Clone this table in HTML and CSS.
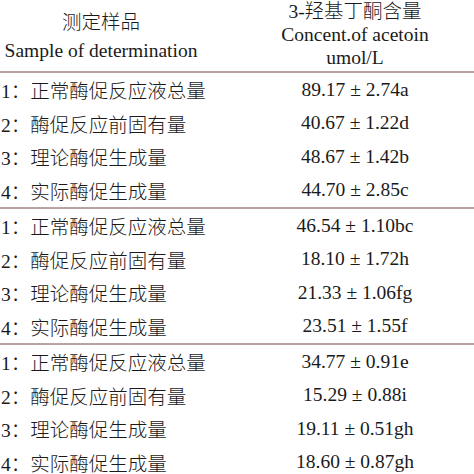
FILE: index.html
```html
<!DOCTYPE html>
<html lang="zh-CN">
<head>
<meta charset="utf-8">
<title>3-羟基丁酮含量</title>
<link rel="stylesheet" href="styles.css">
</head>
<body>
<div class="table">
  <div class="head">
    <div class="hcell left-head">
      <div>测定样品</div>
      <div>Sample of determination</div>
    </div>
    <div class="hcell right-head">
      <div>3-羟基丁酮含量</div>
      <div>Concent.of acetoin</div>
      <div>umol/L</div>
    </div>
  </div>

  <div class="section">
    <div class="row"><div class="name">1：正常酶促反应液总量</div><div class="val">89.17 ± 2.74a</div></div>
    <div class="row"><div class="name">2：酶促反应前固有量</div><div class="val">40.67 ± 1.22d</div></div>
    <div class="row"><div class="name">3：理论酶促生成量</div><div class="val">48.67 ± 1.42b</div></div>
    <div class="row"><div class="name">4：实际酶促生成量</div><div class="val">44.70 ± 2.85c</div></div>
  </div>

  <div class="section">
    <div class="row"><div class="name">1：正常酶促反应液总量</div><div class="val">46.54 ± 1.10bc</div></div>
    <div class="row"><div class="name">2：酶促反应前固有量</div><div class="val">18.10 ± 1.72h</div></div>
    <div class="row"><div class="name">3：理论酶促生成量</div><div class="val">21.33 ± 1.06fg</div></div>
    <div class="row"><div class="name">4：实际酶促生成量</div><div class="val">23.51 ± 1.55f</div></div>
  </div>

  <div class="section">
    <div class="row"><div class="name">1：正常酶促反应液总量</div><div class="val">34.77 ± 0.91e</div></div>
    <div class="row"><div class="name">2：酶促反应前固有量</div><div class="val">15.29 ± 0.88i</div></div>
    <div class="row"><div class="name">3：理论酶促生成量</div><div class="val">19.11 ± 0.51gh</div></div>
    <div class="row"><div class="name">4：实际酶促生成量</div><div class="val">18.60 ± 0.87gh</div></div>
  </div>
</div>
</body>
</html>
```

FILE: styles.css
```css
html, body {
  margin: 0;
  padding: 0;
  background: #ffffff;
}

body {
  width: 474px;
  height: 474px;
  overflow: hidden;
  font-family: "Liberation Serif", "Noto Sans CJK SC", serif;
  font-size: 19.5px;
  font-weight: 300;
  color: #1a1a1a;
}

.table {
  display: flex;
  flex-direction: column;
}

.head {
  display: grid;
  grid-template-columns: 202px 1fr;
  height: 71px;
  border-bottom: 2px solid #b9a3a3;
}

.hcell {
  text-align: center;
  white-space: nowrap;
}

.left-head {
  padding-top: 9px;
  line-height: 28px;
}

.right-head {
  padding-left: 34px;
  line-height: 23px;
}

.section {
  display: flex;
  flex-direction: column;
  border-bottom: 2px solid #b9a3a3;
}

.section:last-child {
  border-bottom: none;
}

.row {
  display: grid;
  grid-template-columns: 202px 1fr;
  height: 33.5px;
  align-items: center;
  white-space: nowrap;
}

.name {
  padding-left: 1px;
}

.val {
  padding-left: 34px;
  text-align: center;
}
```
